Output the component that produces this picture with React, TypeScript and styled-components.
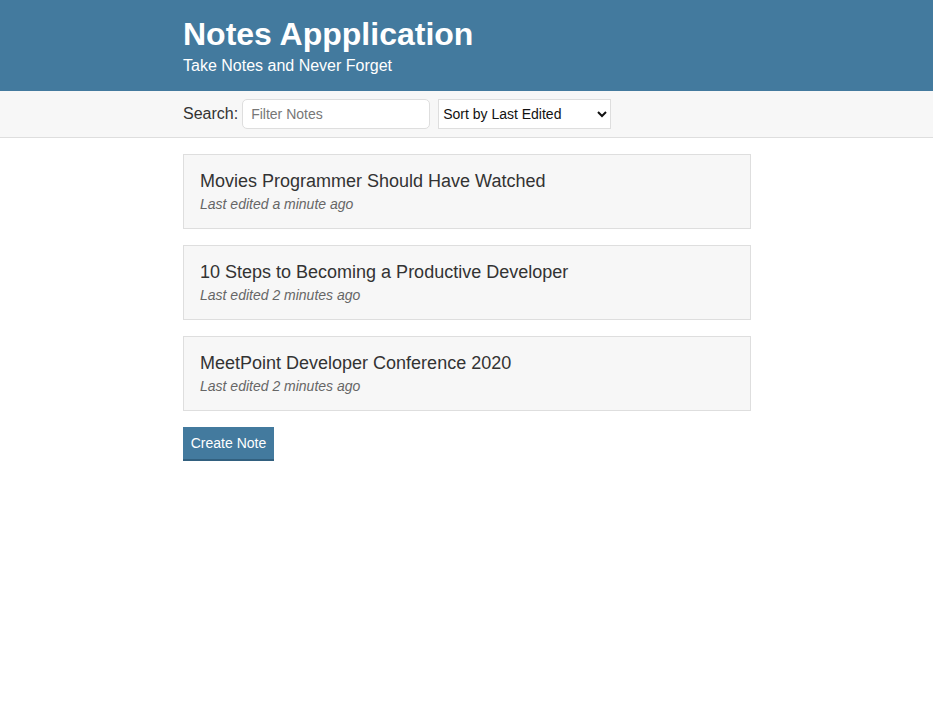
import React from "react";
import styled, { createGlobalStyle } from "styled-components";

const Global = createGlobalStyle`
  html, body { margin: 0; padding: 0; background: #fff; }
  body { font-family: Arial, "Liberation Sans", Helvetica, sans-serif; color: #333; }
  * { box-sizing: border-box; }
`;

const Header = styled.header`
  background: #437a9e;
  color: #fff;
  height: 91px;
  padding-top: 15px;
`;

const Container = styled.div`
  width: 568px;
  margin-left: 183px;
`;

const Title = styled.h1`
  margin: 0;
  font-size: 32px;
  font-weight: bold;
  line-height: 38px;
`;

const Subtitle = styled.h2`
  margin: 2px 0 0;
  font-size: 16px;
  font-weight: 400;
  line-height: 22px;
`;

const Actions = styled.div`
  background: #f7f7f7;
  border-bottom: 1px solid #dedede;
  height: 47px;
`;

const ActionsRow = styled(Container)`
  display: flex;
  align-items: center;
  height: 46px;
  gap: 8px;
`;

const Label = styled.label`
  font-size: 16px;
  color: #333;
  display: flex;
  align-items: center;
  gap: 4px;
`;

const Input = styled.input`
  width: 188px;
  height: 30px;
  border: 1px solid #dedede;
  border-radius: 5px;
  padding: 0 8px;
  font-family: inherit;
  font-size: 14px;
  color: #333;
  outline: none;
  &::placeholder { color: #777; }
`;

const Select = styled.select`
  width: 173px;
  height: 30px;
  border: 1px solid #dedede;
  border-radius: 0;
  background: #fff;
  font-family: inherit;
  font-size: 14px;
  color: #111;
  padding: 0;
`;

const Main = styled(Container)`
  padding-top: 16px;
  display: flex;
  flex-direction: column;
  gap: 16px;
  align-items: flex-start;
`;

const Card = styled.a`
  display: block;
  width: 568px;
  height: 75px;
  background: #f7f7f7;
  border: 1px solid #dedede;
  padding: 16px 16px;
  text-decoration: none;
  color: #333;
`;

const CardTitle = styled.p`
  margin: 0;
  font-size: 18px;
  line-height: 20px;
  color: #333;
`;

const CardSub = styled.p`
  margin: 3px 0 0;
  font-size: 14px;
  font-style: italic;
  line-height: 20px;
  color: #666;
`;

const Button = styled.button`
  background: #437a9e;
  border: none;
  border-bottom: 2px solid #32607f;
  color: #fff;
  font-family: inherit;
  font-size: 14px;
  height: 34px;
  width: 91px;
  padding: 0;
  cursor: pointer;
`;

const notes = [
  { title: "Movies Programmer Should Have Watched", edited: "Last edited a minute ago" },
  { title: "10 Steps to Becoming a Productive Developer", edited: "Last edited 2 minutes ago" },
  { title: "MeetPoint Developer Conference 2020", edited: "Last edited 2 minutes ago" },
];

export default function App() {
  return (
    <>
      <Global />
      <Header>
        <Container>
          <Title>Notes Appplication</Title>
          <Subtitle>Take Notes and Never Forget</Subtitle>
        </Container>
      </Header>
      <Actions>
        <ActionsRow>
          <Label>
            Search:
            <Input placeholder="Filter Notes" />
          </Label>
          <Select defaultValue="edited">
            <option value="edited">Sort by Last Edited</option>
            <option value="created">Sort by Recently Created</option>
            <option value="alpha">Sort Alphabetically</option>
          </Select>
        </ActionsRow>
      </Actions>
      <Main>
        {notes.map((n) => (
          <Card key={n.title}>
            <CardTitle>{n.title}</CardTitle>
            <CardSub>{n.edited}</CardSub>
          </Card>
        ))}
        <Button>Create Note</Button>
      </Main>
    </>
  );
}
